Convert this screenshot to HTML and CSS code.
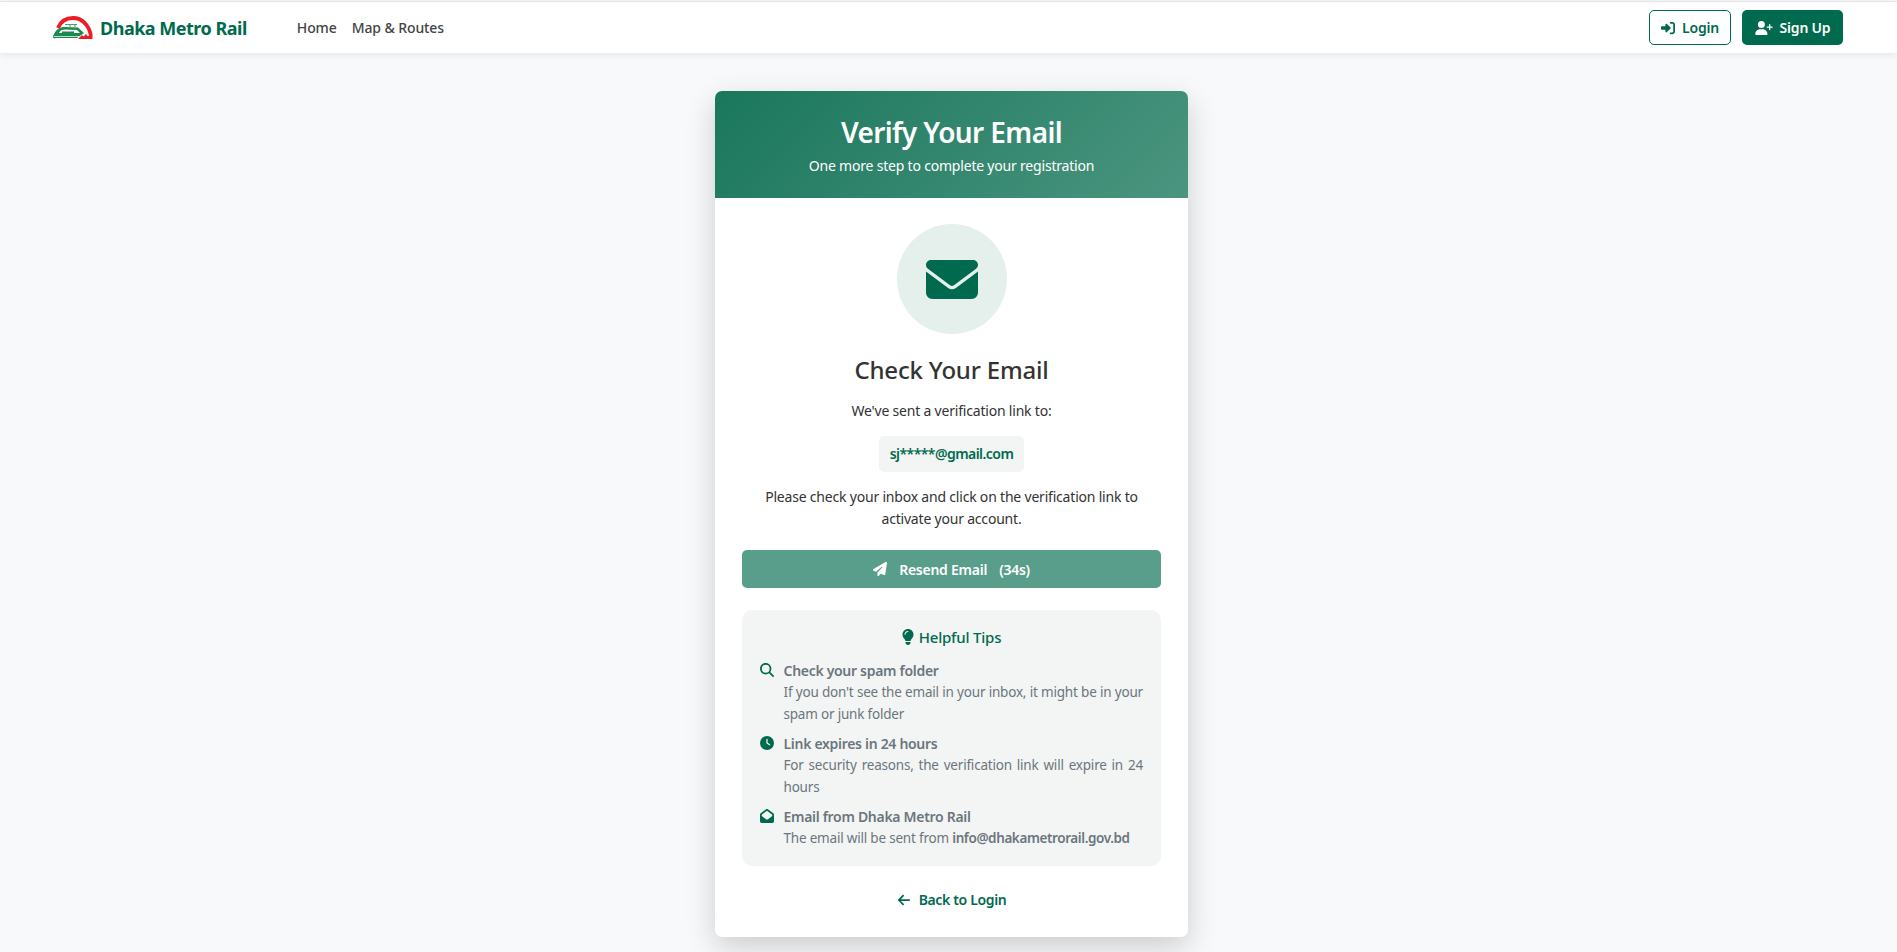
FILE: index.html
```html
<!DOCTYPE html>
<html lang="en">
<head>
    <meta charset="UTF-8">
    <meta name="viewport" content="width=device-width, initial-scale=1.0">
    <title>Verify Your Email - Dhaka Metro Rail</title>
    <link rel="stylesheet" href="styles.css">
</head>
<body>
    <nav class="navbar">
        <a class="brand" href="#">
            <svg class="brand-logo" viewBox="0 0 40 24">
                <path d="M5 12C8 4.500 14 2 20 2C29 2 36 9 38 20" fill="none" stroke="#ee1c25" stroke-width="3.800"/>
                <path d="M0 21C1 16 5 11.500 11 11L25 11.500L31 17L24 22H3C1 23 0 22 0 21Z" fill="#1c8a4f"/>
                <path d="M6 17C7 14.500 9 13.500 12 13.500L24 14L27 17Z" fill="#fff"/>
                <path d="M9 15.500H21V17H9Z" fill="#1c8a4f"/>
                <path d="M12 8.500H24M17 8V11M22 8V11" fill="none" stroke="#1c8a4f" stroke-width="0.800"/>
                <path d="M1 20.500H26M2 23H24" fill="none" stroke="#fff" stroke-width="0.700"/>
                <path d="M25 23L29 19L30.500 20.500L33 18L34.500 20L39.500 20V23Z" fill="#ee1c25"/>
            </svg>
            <span>Dhaka Metro Rail</span>
        </a>
        <div class="nav-links">
            <a href="#">Home</a>
            <a href="#">Map &amp; Routes</a>
        </div>
        <div class="nav-actions">
            <a class="btn btn-outline" href="#">
                <svg class="icon" viewBox="0 0 512 512"><path d="M217.900 105.900L340.700 228.700c7.200 7.200 11.300 17.100 11.300 27.300s-4.100 20.100-11.300 27.300L217.900 406.100c-6.400 6.400-15 9.900-24 9.900c-18.700 0-33.900-15.200-33.900-33.900l0-62.100L32 320c-17.700 0-32-14.300-32-32l0-64c0-17.700 14.300-32 32-32l128 0 0-62.100c0-18.700 15.200-33.900 33.900-33.900c9 0 17.600 3.600 24 9.900zM352 416l64 0c17.700 0 32-14.300 32-32l0-256c0-17.700-14.300-32-32-32l-64 0c-17.700 0-32-14.300-32-32s14.300-32 32-32l64 0c53 0 96 43 96 96l0 256c0 53-43 96-96 96l-64 0c-17.700 0-32-14.300-32-32s14.300-32 32-32z"/></svg>
                Login
            </a>
            <a class="btn btn-solid" href="#">
                <svg class="icon icon-wide" viewBox="0 0 640 512"><path d="M96 128a128 128 0 1 1 256 0A128 128 0 1 1 96 128zM0 482.300C0 383.800 79.800 304 178.300 304h91.400C368.200 304 448 383.800 448 482.300c0 16.400-13.300 29.700-29.700 29.700H29.700C13.300 512 0 498.700 0 482.300zM504 312V248H440c-13.300 0-24-10.700-24-24s10.700-24 24-24h64V136c0-13.300 10.700-24 24-24s24 10.700 24 24v64h64c13.300 0 24 10.700 24 24s-10.700 24-24 24H552v64c0 13.300-10.700 24-24 24s-24-10.700-24-24z"/></svg>
                Sign Up
            </a>
        </div>
    </nav>

    <main class="page">
        <section class="card">
            <header class="card-header">
                <h1>Verify Your Email</h1>
                <p>One more step to complete your registration</p>
            </header>
            <div class="card-body">
                <div class="mail-circle">
                    <svg class="mail-icon" viewBox="0 64 512 384"><path d="M48 64C21.500 64 0 85.500 0 112c0 15.100 7.100 29.300 19.200 38.400L236.800 313.600c11.400 8.500 27 8.500 38.400 0L492.800 150.400c12.100-9.100 19.200-23.300 19.200-38.400c0-26.500-21.500-48-48-48H48zM0 176V384c0 35.300 28.700 64 64 64H448c35.300 0 64-28.700 64-64V176L294.400 339.200c-22.800 17.100-54 17.100-76.800 0L0 176z"/></svg>
                </div>
                <h2>Check Your Email</h2>
                <p class="sent-to">We've sent a verification link to:</p>
                <div class="email-chip">sj*****@gmail.com</div>
                <p class="instructions">Please check your inbox and click on the verification link to activate your account.</p>
                <button class="resend" disabled>
                    <svg class="icon" viewBox="0 0 512 512"><path d="M498.100 5.600c10.100 7 15.400 19.100 13.500 31.200l-64 416c-1.500 9.700-7.400 18.200-16 23s-18.900 5.400-28 1.600L284 427.700l-68.500 74.100c-8.900 9.700-22.900 12.900-35.200 8.100S160 493.200 160 480V396.400c0-4 1.500-7.800 4.200-10.700L331.800 202.800c5.800-6.300 5.600-16-.4-22s-15.700-6.400-22-.7L106 360.800 17.700 316.600C7.100 311.300 .3 300.700 0 288.900s5.900-22.800 16.100-28.700l448-256c10.700-6.100 23.900-5.500 34 1.400z"/></svg>
                    <span>Resend Email</span>
                    <span>(34s)</span>
                </button>

                <div class="tips">
                    <h3>
                        <svg class="tips-bulb" viewBox="0 0 384 512"><path d="M272 384c9.600-31.900 29.500-59.100 49.200-86.200l0 0c5.200-7.100 10.400-14.200 15.400-21.400c19.800-28.500 31.400-63 31.400-100.300C368 78.800 289.200 0 192 0S16 78.800 16 176c0 37.300 11.600 71.900 31.400 100.300c5 7.200 10.200 14.300 15.400 21.400l0 0c19.800 27.100 39.700 54.400 49.200 86.200H272zM192 512c44.200 0 80-35.800 80-80V416H112v16c0 44.200 35.800 80 80 80zM112 176c0 8.800-7.200 16-16 16s-16-7.200-16-16c0-61.900 50.100-112 112-112c8.800 0 16 7.200 16 16s-7.200 16-16 16c-44.200 0-80 35.800-80 80z"/></svg>
                        Helpful Tips
                    </h3>
                    <div class="tip">
                        <svg class="tip-icon" viewBox="0 0 512 512"><path d="M416 208c0 45.900-14.900 88.300-40 122.700L502.600 457.400c12.500 12.500 12.500 32.800 0 45.300s-32.800 12.500-45.300 0L330.700 376c-34.400 25.200-76.800 40-122.700 40C93.100 416 0 322.900 0 208S93.100 0 208 0S416 93.100 416 208zM208 352a144 144 0 1 0 0-288 144 144 0 1 0 0 288z"/></svg>
                        <div>
                            <strong>Check your spam folder</strong>
                            <p>If you don't see the email in your inbox, it might be in your spam or junk folder</p>
                        </div>
                    </div>
                    <div class="tip">
                        <svg class="tip-icon" viewBox="0 0 512 512"><path d="M256 0a256 256 0 1 1 0 512A256 256 0 1 1 256 0zM232 120V256c0 8 4 15.500 10.700 20l96 64c11 7.400 25.900 4.400 33.300-6.700s4.400-25.900-6.700-33.300L280 243.200V120c0-13.300-10.700-24-24-24s-24 10.700-24 24z"/></svg>
                        <div>
                            <strong>Link expires in 24 hours</strong>
                            <p>For security reasons, the verification link will expire in 24 hours</p>
                        </div>
                    </div>
                    <div class="tip">
                        <svg class="tip-icon" viewBox="0 0 512 512"><path d="M64 208.100L256 65.900 448 208.100v47.400L289.500 373c-9.700 7.200-21.400 11-33.500 11s-23.800-3.900-33.500-11L64 255.500V208.100zM256 0c-12.100 0-23.800 3.900-33.500 11L25.900 156.700C9.600 168.800 0 187.800 0 208.100V448c0 35.300 28.700 64 64 64H448c35.300 0 64-28.700 64-64V208.100c0-20.300-9.600-39.300-25.900-51.400L289.500 11C279.800 3.900 268.100 0 256 0z"/></svg>
                        <div>
                            <strong>Email from Dhaka Metro Rail</strong>
                            <p>The email will be sent from <b>info@dhakametrorail.gov.bd</b></p>
                        </div>
                    </div>
                </div>

                <a class="back-link" href="#">
                    <svg class="icon" viewBox="0 0 448 512"><path d="M9.400 233.400c-12.500 12.500-12.500 32.800 0 45.300l160 160c12.500 12.500 32.800 12.500 45.300 0s12.500-32.800 0-45.300L109.200 288 416 288c17.700 0 32-14.300 32-32s-14.300-32-32-32l-306.700 0L214.600 118.600c12.500-12.500 12.500-32.800 0-45.300s-32.800-12.500-45.300 0l-160 160z"/></svg>
                    Back to Login
                </a>
            </div>
        </section>
    </main>
</body>
</html>
```

FILE: styles.css
```css
* {
    box-sizing: border-box;
}
body {
    margin: 0;
    min-height: 952px;
    font-family: "Noto Sans", sans-serif;
    font-size: 14px;
    letter-spacing: -0.2px;
    color: #333;
    background-color: #f8f9fa;
}
a {
    text-decoration: none;
}
p, h1, h2, h3 {
    margin: 0;
}
.icon {
    width: 14px;
    height: 14px;
    fill: currentColor;
}
.icon-wide {
    width: 18px;
}

/* navbar */
.navbar {
    display: flex;
    align-items: center;
    height: 52px;
    margin-top: 1px;
    padding: 0 54px 0 53px;
    background-color: #fff;
    border-top: 1px solid #e4e4ea;
    box-shadow: 0 2px 8px rgba(0, 0, 0, 0.08);
}
.brand {
    display: flex;
    align-items: center;
    gap: 7px;
    color: #006a4e;
    font-size: 18px;
    font-weight: 700;
    letter-spacing: -0.5px;
}
.brand-logo {
    width: 40px;
    height: 24px;
}
.nav-links {
    display: flex;
    gap: 15px;
    margin-left: 50px;
}
.nav-links a {
    color: #444;
    font-weight: 500;
    letter-spacing: -0.1px;
}
.nav-actions {
    display: flex;
    gap: 11px;
    margin-left: auto;
}
.btn {
    display: flex;
    align-items: center;
    justify-content: center;
    gap: 7px;
    height: 35px;
    border-radius: 5px;
    font-weight: 600;
}
.btn-outline {
    width: 82px;
    color: #006a4e;
    border: 1px solid #006a4e;
}
.btn-solid {
    width: 101px;
    color: #fff;
    background-color: #006a4e;
}

/* card */
.page {
    display: flex;
    justify-content: center;
    padding: 38px 0 0 6px;
}
.card {
    width: 473px;
    border-radius: 7px;
    overflow: hidden;
    background-color: #fff;
    box-shadow: 0 10px 30px rgba(0, 0, 0, 0.18);
}
.card-header {
    height: 107px;
    padding-top: 22px;
    text-align: center;
    color: #fff;
    background: linear-gradient(135deg, #1a775c, #4b957f);
}
.card-header h1 {
    font-size: 28px;
    font-weight: 600;
    letter-spacing: -0.6px;
    line-height: 38px;
}
.card-header p {
    margin-top: 5px;
    font-size: 14px;
}
.card-body {
    display: flex;
    flex-direction: column;
    align-items: center;
    padding: 26px 27px 27px;
    text-align: center;
}
.mail-circle {
    display: flex;
    align-items: center;
    justify-content: center;
    width: 110px;
    height: 110px;
    border-radius: 50%;
    background-color: #e5f0ed;
}
.mail-icon {
    width: 52px;
    height: 39px;
    fill: #006a4e;
}
.card-body h2 {
    margin-top: 18px;
    font-size: 24px;
    font-weight: 500;
    letter-spacing: -0.2px;
    line-height: 36px;
}
.sent-to {
    margin-top: 12px;
    line-height: 22px;
}
.email-chip {
    margin-top: 14px;
    width: 145px;
    height: 36px;
    line-height: 35px;
    border-radius: 5px;
    color: #006a4e;
    font-weight: 600;
    letter-spacing: -0.55px;
    background-color: #f2f5f4;
}
.instructions {
    margin-top: 14px;
    line-height: 22px;
}
.resend {
    display: flex;
    align-items: center;
    justify-content: center;
    gap: 12px;
    width: 100%;
    height: 38px;
    margin-top: 20px;
    border: none;
    border-radius: 5px;
    color: #fff;
    font: inherit;
    font-weight: 600;
    letter-spacing: -0.25px;
    background-color: #599e8a;
}

/* tips box */
.tips {
    width: 100%;
    height: 256px;
    margin-top: 22px;
    padding: 15px 18px;
    border-radius: 10px;
    text-align: left;
    color: #6c757d;
    background-color: #f2f5f4;
}
.tips h3 {
    display: flex;
    align-items: center;
    justify-content: center;
    gap: 5px;
    margin-bottom: 11px;
    color: #006a4e;
    font-size: 15px;
    font-weight: 500;
    line-height: 24px;
}
.tips-bulb {
    width: 12px;
    height: 16px;
    fill: #006a4e;
}
.tip {
    display: flex;
    gap: 9.500px;
    margin-bottom: 8px;
}
.tip-icon {
    flex: none;
    width: 14px;
    height: 14px;
    margin-top: 3px;
    fill: #006a4e;
}
.tip strong {
    display: block;
    font-weight: 600;
    letter-spacing: -0.3px;
    line-height: 22px;
}
.tip p {
    font-size: 13.500px;
    letter-spacing: -0.2px;
    text-align: justify;
    line-height: 21.500px;
}
.tip b {
    font-weight: 600;
    letter-spacing: -0.4px;
}
.back-link {
    display: flex;
    align-items: center;
    gap: 8px;
    margin-top: 24px;
    color: #006a4e;
    font-weight: 600;
    letter-spacing: -0.35px;
    line-height: 20px;
}
```
